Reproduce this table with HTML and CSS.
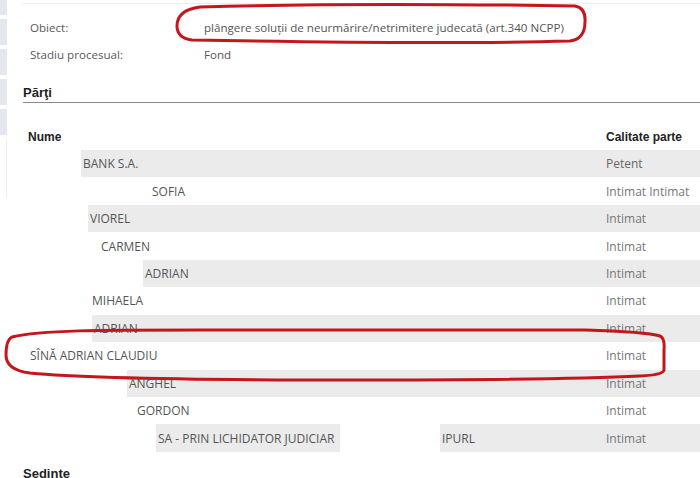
FILE: index.html
```html
<!DOCTYPE html>
<html lang="ro">
<head>
    <meta charset="UTF-8">
    <title>Dosar - Părţi</title>
    <link rel="stylesheet" href="styles.css">
</head>
<body>
    <div class="page">
        <div class="side">
            <div class="tile"></div>
            <div class="tile t2"></div>
            <div class="tile t2"></div>
            <div class="tile t2"></div>
            <div class="tile t2"></div>
            <div class="tile blank-tile"></div>
        </div>

        <div class="main">
            <div class="details">
                <div class="label">Obiect:</div>
                <div class="value">plângere soluţii de neurmărire/netrimitere judecată (art.340 NCPP)</div>
                <div class="label">Stadiu procesual:</div>
                <div class="value">Fond</div>
            </div>

            <h2 class="section">Părţi</h2>

            <table class="parti">
                <thead>
                    <tr>
                        <th class="col-name">Nume</th>
                        <th class="col-role">Calitate parte</th>
                    </tr>
                </thead>
                <tbody>
                    <tr class="odd">
                        <td><div class="cell"><span class="mask" style="width:58px"></span><span class="nm">BANK S.A.</span></div></td>
                        <td class="role dark">Petent</td>
                    </tr>
                    <tr>
                        <td><div class="cell"><span class="mask" style="width:127px"></span><span class="nm">SOFIA</span></div></td>
                        <td class="role">Intimat Intimat</td>
                    </tr>
                    <tr class="odd">
                        <td><div class="cell"><span class="mask" style="width:65px"></span><span class="nm">VIOREL</span></div></td>
                        <td class="role">Intimat</td>
                    </tr>
                    <tr>
                        <td><div class="cell"><span class="mask" style="width:76px"></span><span class="nm">CARMEN</span></div></td>
                        <td class="role">Intimat</td>
                    </tr>
                    <tr class="odd">
                        <td><div class="cell"><span class="mask" style="width:120px"></span><span class="nm">ADRIAN</span></div></td>
                        <td class="role">Intimat</td>
                    </tr>
                    <tr>
                        <td><div class="cell"><span class="mask" style="width:67px"></span><span class="nm">MIHAELA</span></div></td>
                        <td class="role">Intimat</td>
                    </tr>
                    <tr class="odd">
                        <td><div class="cell"><span class="mask" style="width:69px"></span><span class="nm">ADRIAN</span></div></td>
                        <td class="role">Intimat</td>
                    </tr>
                    <tr>
                        <td><div class="cell"><span class="mask" style="width:5px"></span><span class="nm">SÎNĂ ADRIAN CLAUDIU</span></div></td>
                        <td class="role">Intimat</td>
                    </tr>
                    <tr class="odd">
                        <td><div class="cell"><span class="mask" style="width:104px"></span><span class="nm">ANGHEL</span></div></td>
                        <td class="role">Intimat</td>
                    </tr>
                    <tr>
                        <td><div class="cell"><span class="mask" style="width:112px"></span><span class="nm">GORDON</span></div></td>
                        <td class="role">Intimat</td>
                    </tr>
                    <tr class="odd">
                        <td><div class="cell"><span class="mask" style="width:133px"></span><span class="nm fixed">SA - PRIN LICHIDATOR JUDICIAR</span><span class="mask" style="width:100px"></span><span class="nm">IPURL</span></div></td>
                        <td class="role">Intimat</td>
                    </tr>
                </tbody>
            </table>

            <h2 class="section plain">Sedinte</h2>
        </div>
    </div>

    <!-- red marker annotations drawn over the screenshot -->
    <svg class="marks" width="700" height="478" viewBox="0 0 700 478">
        <path d="M200 7 C300 4 450 4 575 6 Q586 8 585 22 Q585 39 570 41 C460 44 300 42 192 40 Q177 38 177 26 Q177 10 200 7 Z"/>
        <path d="M12 337 C40 330 100 330 200 330 L585 330 C620 331 650 333 660 336 Q665 338 664 350 L664 370 Q663 375 640 376 C600 378 500 380 350 380 C200 380 80 378 30 373 Q6 370 6 355 Q6 340 12 337 Z"/>
    </svg>
</body>
</html>
```

FILE: styles.css
```css
body {
    margin: 0;
    background: white;
    font-family: 'Open Sans', 'DejaVu Sans', sans-serif;
    font-size: 12px;
    color: #555;
    overflow: hidden;
    width: 700px;
    height: 478px;
    position: relative;
}
.page {
    display: flex;
    align-items: flex-start;
}
.side {
    width: 7px;
    display: flex;
    flex-direction: column;
    gap: 4px;
    flex-shrink: 0;
}
.tile {
    height: 15px;
    background: #e4e7ee;
}
.tile.t2 {
    height: 26px;
}
.blank-tile {
    height: 60px;
    background: white;
    border-right: 1px solid #eceef2;
}
.main {
    margin-left: 16px;
    margin-top: 3px;
    width: 720px;
    flex-shrink: 0;
    border-top: 1px solid #ececec;
}
.details {
    display: grid;
    grid-template-columns: 174px 1fr;
    grid-auto-rows: 27px;
    align-items: center;
    padding: 10px 0 0 7px;
    font-size: 11.6px;
}
.details .label {
    color: #5a5a5a;
}
.details .value {
    color: #555;
}
.section {
    font-family: 'Liberation Sans', Arial, sans-serif;
    font-size: 13px;
    font-weight: bold;
    color: #222;
    margin: 17px 0 0 0;
    line-height: 16px;
    padding-bottom: 1px;
    border-bottom: 1px solid #8a8a8a;
}
.section.plain {
    border-bottom: none;
    margin-top: 14px;
}
.parti {
    border-collapse: collapse;
    width: 720px;
    margin-top: 20px;
}
.parti th {
    font-family: 'Liberation Sans', Arial, sans-serif;
    font-size: 12px;
    font-weight: bold;
    color: #222;
    text-align: left;
    height: 27px;
    padding: 0 5px;
}
.parti .col-name {
    width: 568px;
}
.parti td {
    height: 27.45px;
    padding: 0;
}
.parti tr.odd {
    background: #ebebeb;
}
.cell {
    display: flex;
    align-items: stretch;
    height: 27.45px;
}
.mask {
    background: white;
    flex-shrink: 0;
}
.nm {
    display: flex;
    align-items: center;
    padding-left: 2px;
    color: #555;
}
.nm.fixed {
    width: 182px;
}
.role {
    padding-left: 5px !important;
    color: #777;
}
.role.dark {
    color: #666;
}
.marks {
    position: absolute;
    left: 0;
    top: 0;
    pointer-events: none;
}
.marks path {
    fill: none;
    stroke: #c4161c;
    stroke-width: 3;
    stroke-linejoin: round;
}
```
